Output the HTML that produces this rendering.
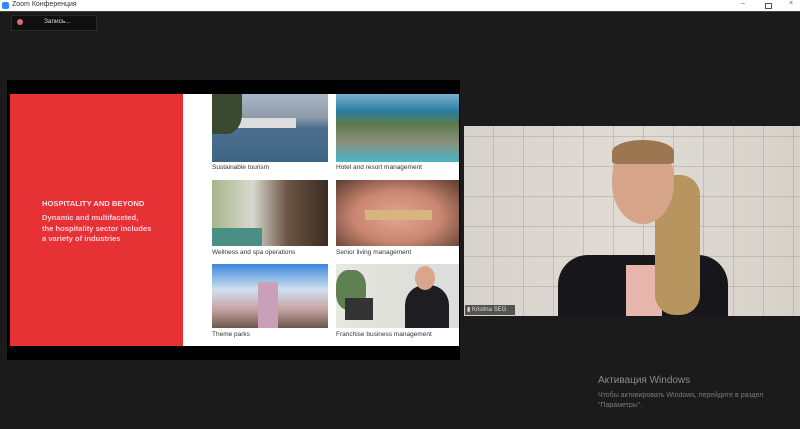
<!DOCTYPE html>
<html><head><meta charset="utf-8"><style>
body{margin:0;width:800px;height:429px;background:#1b1b1b;position:relative;overflow:hidden;font-family:"Liberation Sans","Noto Sans CJK SC",sans-serif}
.a{position:absolute}
.cap{position:absolute;font-size:6.5px;color:#333}
</style></head><body>
<div class="a" style="left:0;top:0;width:800px;height:11px;background:#fff"></div>
<div class="a" style="left:2px;top:2px;width:7px;height:7px;background:#2d8cff;border-radius:2px"></div>
<div class="a" style="left:12px;top:1px;font-size:7px;color:#333">Zoom Конференция</div>
<div class="a" style="left:741px;top:0;font-size:7px;color:#555">–</div>
<div class="a" style="left:765px;top:3px;width:5px;height:4px;border:1px solid #555"></div>
<div class="a" style="left:789px;top:0;font-size:7px;color:#555">×</div>
<div class="a" style="left:0;top:11px;width:800px;height:1px;background:#444"></div>
<div class="a" style="left:11px;top:15px;width:84px;height:14px;background:#0f0f0f;border:1px solid #2a2a2a"></div>
<div class="a" style="left:17px;top:19px;width:6px;height:6px;border-radius:50%;background:#e06a7a"></div>
<div class="a" style="left:44px;top:18px;font-size:6.5px;color:#ddd">Запись...</div>

<div class="a" style="left:7px;top:80px;width:453px;height:280px;background:#000"></div>
<div class="a" style="left:10px;top:94px;width:173px;height:252px;background:#e63234"></div>
<div class="a" style="left:183px;top:94px;width:276px;height:252px;background:#fff"></div>
<div class="a" style="left:42px;top:199px;font-size:7.6px;font-weight:bold;color:#fde">HOSPITALITY AND BEYOND</div>
<div class="a" style="left:42px;top:213px;font-size:7.6px;font-weight:bold;color:#fcd;line-height:10.5px">Dynamic and multifaceted,<br>the hospitality sector includes<br>a variety of industries</div>

<div class="a" style="left:212px;top:94px;width:116px;height:68px;background:linear-gradient(#a9b8c8 0,#8d9aa7 35%,#4d6f8f 50%,#3e6585 100%)"></div>
<div class="a" style="left:236px;top:118px;width:60px;height:10px;background:#ddd"></div>
<div class="a" style="left:212px;top:94px;width:30px;height:40px;background:#3a4a30;border-radius:0 0 50% 0"></div>
<div class="cap" style="left:212px;top:164px">Sustainable tourism</div>
<div class="a" style="left:336px;top:94px;width:123px;height:68px;background:linear-gradient(#7ab0cf 0,#2a7da0 25%,#5d7a4a 45%,#8a8f7a 70%,#4ab5c7 100%)"></div>
<div class="cap" style="left:336px;top:164px">Hotel and resort management</div>
<div class="a" style="left:212px;top:180px;width:116px;height:66px;background:linear-gradient(90deg,#a8b58a 0,#d8d8cf 35%,#6b5444 65%,#3a2c23 100%)"></div>
<div class="a" style="left:212px;top:228px;width:50px;height:18px;background:#4a8e86"></div>
<div class="cap" style="left:212px;top:249px">Wellness and spa operations</div>
<div class="a" style="left:336px;top:180px;width:123px;height:66px;background:radial-gradient(ellipse at 50% 55%,#e0a78f 0,#c98670 50%,#5a3a30 100%)"></div>
<div class="a" style="left:365px;top:210px;width:67px;height:10px;background:#d8b57e"></div>
<div class="cap" style="left:336px;top:249px">Senior living management</div>
<div class="a" style="left:212px;top:264px;width:116px;height:64px;background:linear-gradient(#3a88d8 0,#cfe0f0 40%,#c9a4a4 70%,#6a5a4a 100%)"></div>
<div class="a" style="left:258px;top:282px;width:20px;height:46px;background:#c9a0b8"></div>
<div class="cap" style="left:212px;top:331px">Theme parks</div>
<div class="a" style="left:336px;top:264px;width:123px;height:64px;background:linear-gradient(90deg,#e8e8e2 0,#dfe0da 40%,#ddd 100%)"></div>
<div class="a" style="left:336px;top:270px;width:30px;height:40px;background:#5f8050;border-radius:40%"></div>
<div class="a" style="left:405px;top:285px;width:44px;height:43px;background:#1d1d22;border-radius:20px 20px 0 0"></div>
<div class="a" style="left:415px;top:266px;width:20px;height:24px;background:#d9a68c;border-radius:50%"></div>
<div class="a" style="left:345px;top:298px;width:28px;height:22px;background:#333"></div>
<div class="cap" style="left:336px;top:331px">Franchise business management</div>

<div class="a" style="left:464px;top:126px;width:336px;height:190px;background:repeating-linear-gradient(90deg,transparent 0 29px,rgba(150,140,130,.35) 29px 30px),repeating-linear-gradient(0deg,transparent 0 29px,rgba(150,140,130,.35) 29px 30px),linear-gradient(90deg,#d7d2cb,#e0dbd4 50%,#d6d1c9)"></div>
<div class="a" style="left:558px;top:255px;width:170px;height:61px;background:#17161a;border-radius:30px 30px 0 0"></div>
<div class="a" style="left:626px;top:265px;width:36px;height:51px;background:#e6b6ac"></div>
<div class="a" style="left:655px;top:175px;width:45px;height:140px;background:#b8945e;border-radius:20px"></div>
<div class="a" style="left:612px;top:142px;width:62px;height:82px;background:#d6a488;border-radius:45% 45% 50% 50%"></div>
<div class="a" style="left:612px;top:140px;width:62px;height:24px;background:#9c7650;border-radius:50% 50% 10% 10%"></div>
<div class="a" style="left:465px;top:305px;width:48px;height:10px;background:rgba(40,40,40,.75);font-size:6px;color:#ddd;line-height:10px;padding-left:2px">▮ Kristina SEG</div>

<div class="a" style="left:598px;top:375px;font-size:10px;color:#8a8a8a">Активация Windows</div>
<div class="a" style="left:598px;top:391px;font-size:7px;color:#7a7a7a;line-height:10px">Чтобы активировать Windows, перейдите в раздел<br>"Параметры".</div>
</body></html>
